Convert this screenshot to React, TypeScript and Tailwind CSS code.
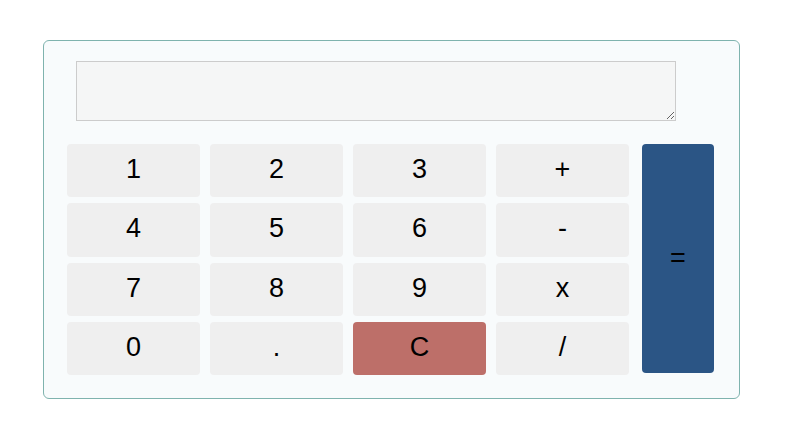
export default function App() {
  const rows = [
    ['1', '2', '3', '+'],
    ['4', '5', '6', '-'],
    ['7', '8', '9', 'x'],
    ['0', '.', 'C', '/'],
  ]

  return (
    <div className="min-h-[443px] bg-white pt-[40px] pl-[43px] font-['Liberation_Sans',Arial,sans-serif]">
      <div className="w-[697px] h-[359px] rounded-[6px] border border-[#7fb3ae] bg-[#f8fbfc] pt-[20px] pl-[23px]">
        <textarea
          className="block ml-[9px] w-[600px] h-[60px] border border-[#cccccc] bg-[#f5f6f6] outline-none"
          readOnly
        />
        <div className="mt-[23px] flex items-start">
          <div className="grid grid-cols-[repeat(4,133px)] grid-rows-4 gap-x-[10px] gap-y-[6px] h-[231px]">
            {rows.flat().map((k) => (
              <button
                key={k}
                className={
                  'rounded-[4px] pb-[2px] text-[27px] leading-none text-black ' +
                  (k === 'C' ? 'bg-[#bd6f69]' : 'bg-[#efefef]')
                }
              >
                {k}
              </button>
            ))}
          </div>
          <button className="ml-[13px] w-[72px] h-[229px] rounded-[4px] bg-[#2b5585] text-[27px] leading-none text-black">
            =
          </button>
        </div>
      </div>
    </div>
  )
}
